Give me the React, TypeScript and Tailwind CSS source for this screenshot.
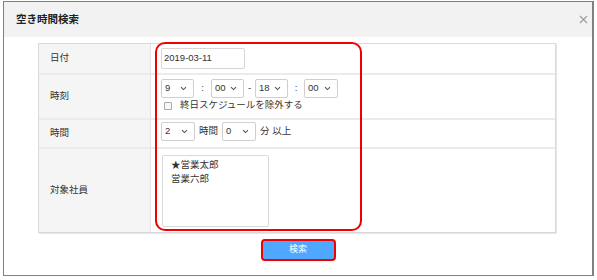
import React from "react";

const Chevron = () => (
    <svg width="7" height="5" viewBox="0 0 7 5" className="shrink-0">
        <path d="M1 1.2 L3.5 3.6 L6 1.2" fill="none" stroke="#555" strokeWidth="1.1" />
    </svg>
);

function Select({ value, w }: { value: string; w: string }) {
    return (
        <div className={`${w} h-[19px] flex items-center justify-between pl-[3px] pr-[6px] border border-[#cfcfcf] rounded-[2px] bg-white text-[#333]`}>
            <span>{value}</span>
            <Chevron />
        </div>
    );
}

function Label({ children, h, first }: { children: React.ReactNode; h: string; first?: boolean }) {
    return (
        <div className={`${h} flex items-center pl-[11px] bg-[#f5f5f5] border-r border-[#e3e3e3] text-[#333] ${first ? "" : "border-t-2 border-t-[#ebebeb]"}`}>
            {children}
        </div>
    );
}

export default function App() {
    return (
        <div className="relative w-[597px] h-[280px] bg-white pl-[3px] pt-[1px] text-[9.5px] font-['Liberation_Sans','Noto_Sans_CJK_JP',sans-serif]">
            <div className="w-[591px] h-[275px] border border-r-2 border-[#808080] bg-white flex flex-col">
                {/* header */}
                <div className="h-[35px] bg-[#f2f2f2] flex items-center justify-between pl-[12px] pr-[4px]">
                    <span className="text-[10.5px] font-bold text-[#222]">空き時間検索</span>
                    <svg width="9" height="9" viewBox="0 0 9 9">
                        <path d="M1 1 L8 8 M8 1 L1 8" stroke="#9a9a9a" strokeWidth="1.1" />
                    </svg>
                </div>

                {/* form table */}
                <div className="pl-[34px] pt-[6px]">
                    <div className="w-[518px] grid grid-cols-[112px_1fr] border border-[#dadada] shadow-[1px_1px_0_#e6e6e6]">
                        <Label h="h-[29px]" first>日付</Label>
                        <div className="h-[29px] pl-[10px] pt-[4px]">
                            <div className="w-[84px] h-[21px] flex items-center pl-[2px] border border-[#d6d6d6] rounded-[2px] text-[#333]">
                                2019-03-11
                            </div>
                        </div>

                        <Label h="h-[45px]">時刻</Label>
                        <div className="h-[45px] pl-[10px] pt-[4px] border-t-2 border-[#ebebeb]">
                            <div className="flex items-center text-[#333]">
                                <Select value="9" w="w-[33px]" />
                                <span className="w-[17px] text-center">:</span>
                                <Select value="00" w="w-[33px]" />
                                <span className="w-[11px] text-center">-</span>
                                <Select value="18" w="w-[33px]" />
                                <span className="w-[16px] text-center">:</span>
                                <Select value="00" w="w-[34px]" />
                            </div>
                            <div className="flex items-center gap-[8px] mt-[1px] pl-[3px] text-[#333] h-[13px]">
                                <span className="w-[8px] h-[8px] border border-[#a8a8a8] bg-[#f8f8f8] rounded-[1px]" />
                                <span>終日スケジュールを除外する</span>
                            </div>
                        </div>

                        <Label h="h-[29px]">時間</Label>
                        <div className="h-[29px] pl-[10px] pt-[2px] border-t-2 border-[#ebebeb] flex items-start text-[#333]">
                            <div className="flex items-center">
                                <Select value="2" w="w-[34px]" />
                                <span className="px-[4px]">時間</span>
                                <Select value="0" w="w-[34px]" />
                                <span className="pl-[4px]">分 以上</span>
                            </div>
                        </div>

                        <Label h="h-[85px]">対象社員</Label>
                        <div className="h-[85px] pl-[11px] pt-[6px] border-t-2 border-[#ebebeb]">
                            <div className="w-[107px] h-[72px] border border-[#d9d9d9] rounded-[2px] pl-[8px] pt-[2px] text-[#333] leading-[14px]">
                                <div>★営業太郎</div>
                                <div>営業六郎</div>
                            </div>
                        </div>
                    </div>
                </div>

                {/* action */}
                <div className="flex justify-center pt-[6px]">
                    <button className="w-[75px] h-[22px] rounded-[4px] border-2 border-[#f00000] bg-[#4ea8ff] text-white text-[9px]">
                        検索
                    </button>
                </div>
            </div>

            {/* red highlight annotation */}
            <div className="absolute left-[155px] top-[42px] w-[207px] h-[189px] rounded-[10px] border-2 border-[#f00000] pointer-events-none" />
        </div>
    );
}
